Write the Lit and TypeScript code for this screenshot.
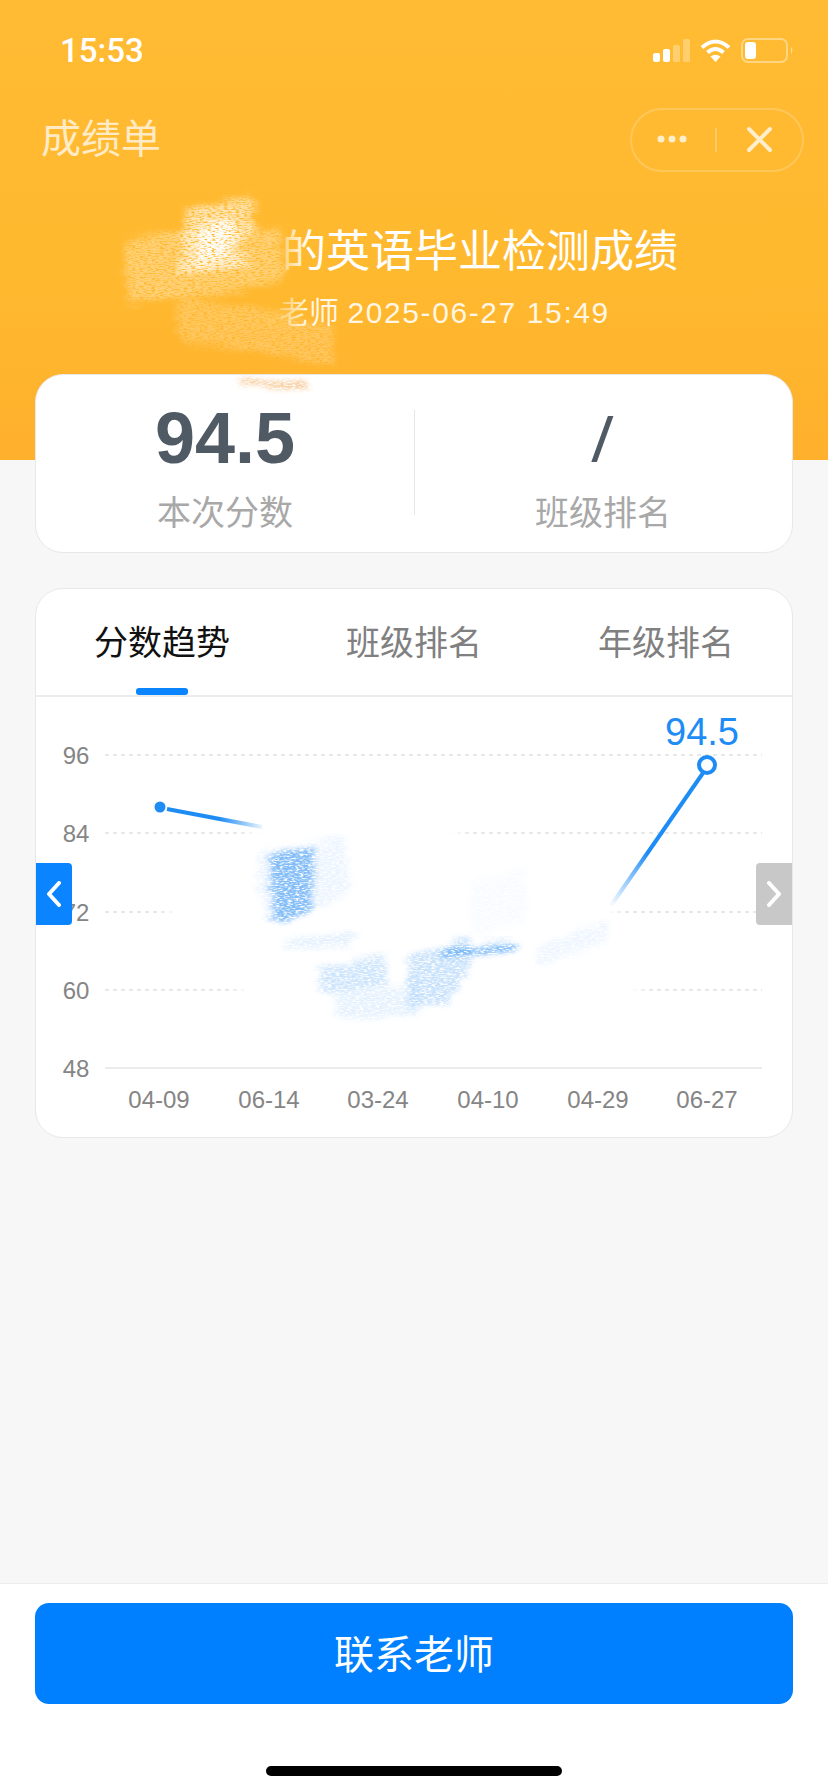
import { LitElement, html, css, svg } from 'lit';
import { customElement } from 'lit/decorators.js';

const GRID_Y = [
  { label: '96', y: 755 },
  { label: '84', y: 833 },
  { label: '72', y: 912 },
  { label: '60', y: 990 },
  { label: '48', y: 1068 },
];

const DATES = [
  { label: '04-09', x: 159 },
  { label: '06-14', x: 269 },
  { label: '03-24', x: 378 },
  { label: '04-10', x: 488 },
  { label: '04-29', x: 598 },
  { label: '06-27', x: 707 },
];

// the scribbled-out parts of the picture, in page coordinates
const HEADER_MARKS = [
  { points: '126,240 200,230 280,228 284,282 200,296 126,302', fill: '#fff', op: 0.36 },
  { points: '178,298 250,306 330,326 336,366 260,352 180,340', fill: '#fff', op: 0.24 },
  { points: '186,207 256,197 252,226 236,250 250,264 180,274', fill: '#fff', op: 0.62 },
  { points: '198,224 232,216 230,256 198,268', fill: '#fff', op: 0.9 },
  { points: '236,377 308,381 306,389 238,384', fill: '#f6c48a', op: 0.85 },
];

const CHART_MARKS = [
  { points: '258,852 345,838 350,896 272,925 258,895', fill: '#dcecff', op: 0.55 },
  { points: '270,856 314,846 312,912 274,924', fill: '#7dbaf8', op: 0.95 },
  { points: '283,940 355,934 355,945 283,947', fill: '#c2dffc', op: 0.5 },
  { points: '318,966 385,958 388,986 322,992', fill: '#a6d0fa', op: 0.55 },
  { points: '335,992 420,984 420,1016 335,1018', fill: '#cce4fd', op: 0.5 },
  { points: '408,954 470,938 472,966 450,1003 408,1010', fill: '#a6d0fa', op: 0.6 },
  { points: '442,949 516,942 516,952 442,956', fill: '#5aa8f6', op: 0.85 },
  { points: '470,882 527,868 527,923 470,935', fill: '#f1f7ff', op: 0.5 },
  { points: '537,944 608,920 608,943 539,964', fill: '#e0eeff', op: 0.55 },
];

@customElement('app-root')
export class AppRoot extends LitElement {
  static styles = css`
    :host {
      display: block;
      font-family: "Liberation Sans", "Noto Sans CJK SC", sans-serif;
    }
    .page {
      position: relative;
      display: flex;
      flex-direction: column;
      height: 1792px;
      background: #f7f7f7;
      overflow: hidden;
    }
    .header {
      height: 460px;
      box-sizing: border-box;
      flex: none;
      background: linear-gradient(180deg, #ffbb33 0%, #ffb92f 60%, #ffb02c 100%);
      color: #fff;
    }
    .status {
      height: 100px;
      display: flex;
      align-items: center;
      justify-content: space-between;
      padding: 0 34px 0 60px;
    }
    .time {
      font-family: Roboto, sans-serif;
      font-size: 33px;
      font-weight: 500;
    }
    .status-icons {
      display: flex;
      align-items: center;
      gap: 10px;
    }
    .status-icons svg {
      display: block;
    }
    .nav {
      height: 64px;
      margin-top: 8px;
      display: flex;
      align-items: center;
      justify-content: space-between;
      padding: 0 24px 0 41px;
    }
    .nav-title {
      font-size: 40px;
      line-height: 56px;
      margin-top: -2px;
      color: rgba(255, 255, 255, 0.72);
    }
    .capsule {
      width: 174px;
      height: 64px;
      box-sizing: border-box;
      border: 2px solid rgba(255, 255, 255, 0.2);
      border-radius: 32px;
      display: flex;
      align-items: center;
    }
    .capsule svg {
      display: block;
    }
    .headline {
      margin-top: 50px;
      text-align: center;
      font-size: 44px;
      line-height: 60px;
    }
    .subline {
      margin-top: 11px;
      text-align: center;
      font-size: 30px;
      line-height: 40px;
      color: rgba(255, 255, 255, 0.88);
    }
    .date {
      letter-spacing: 1.6px;
    }
    .redacted {
      display: inline-block;
      width: 132px;
    }
    .subline .redacted {
      width: 61px;
    }
    .card {
      background: #fff;
      border: 1px solid #e8e8e8;
      border-radius: 28px;
      margin: 0 35px;
      box-sizing: border-box;
    }
    .stats {
      flex: none;
      height: 179px;
      margin-top: -86px;
      display: flex;
      position: relative;
    }
    .stat {
      flex: 1;
      display: flex;
      flex-direction: column;
      align-items: center;
      color: #4f5a64;
    }
    .stat + .stat {
      position: relative;
    }
    .stat + .stat::before {
      content: '';
      position: absolute;
      left: 0;
      top: 35px;
      height: 105px;
      width: 1px;
      background: #e6e6e6;
    }
    .stat-value {
      height: 92px;
      margin-top: 17px;
      line-height: 92px;
      font-size: 72px;
      font-weight: 700;
    }
    .stat-value.empty {
      font-family: Roboto, sans-serif;
      font-weight: 500;
      font-size: 60px;
    }
    .stat-label {
      margin-top: 6px;
      font-size: 34px;
      line-height: 46px;
      color: #a8a8a8;
    }
    .trend {
      flex: none;
      height: 550px;
      margin-top: 35px;
      overflow: hidden;
    }
    .tabs {
      height: 108px;
      box-sizing: border-box;
      display: flex;
      border-bottom: 2px solid #ececec;
    }
    .tab {
      flex: 1;
      position: relative;
      text-align: center;
      font-size: 34px;
      line-height: 46px;
      padding-top: 31px;
      color: #808080;
    }
    .tab.active {
      color: #111;
    }
    .tab.active::after {
      content: '';
      position: absolute;
      left: 50%;
      bottom: 0;
      width: 52px;
      height: 7px;
      margin-left: -26px;
      border-radius: 3px;
      background: #0a84ff;
    }
    .chart {
      position: relative;
      height: 440px;
    }
    .chart > svg {
      display: block;
    }
    .chart text {
      font-family: "Liberation Sans", sans-serif;
      font-size: 24px;
      fill: #858585;
    }
    .chart text.peak {
      font-size: 38px;
      fill: #1e8cf5;
    }
    .arrow {
      position: absolute;
      top: 166px;
      width: 36px;
      height: 62px;
      display: flex;
      align-items: center;
      justify-content: center;
    }
    .arrow.prev {
      left: 0;
      background: #0a84ff;
      border-radius: 0 4px 4px 0;
    }
    .arrow.next {
      right: 0;
      background: #c8c8c8;
      border-radius: 4px 0 0 4px;
    }
    .spacer {
      flex: 1;
    }
    .footer {
      flex: none;
      height: 209px;
      box-sizing: border-box;
      background: #fff;
      border-top: 1px solid #ededed;
      padding: 19px 35px 0;
      display: flex;
      flex-direction: column;
      align-items: center;
    }
    .contact {
      width: 100%;
      height: 101px;
      box-sizing: border-box;
      padding-top: 3px;
      border-radius: 14px;
      background: #0080ff;
      color: #fff;
      font-size: 40px;
      line-height: 98px;
      text-align: center;
    }
    .home-bar {
      width: 296px;
      height: 10px;
      margin-top: 62px;
      border-radius: 5px;
      background: #000;
    }
    .marks {
      position: absolute;
      left: 0;
      top: 0;
      pointer-events: none;
    }
  `;

  private marks(list: { points: string; fill: string; op: number }[], filter: string) {
    return list.map(
      (m) => svg`<polygon points=${m.points} fill=${m.fill} opacity=${m.op} filter=${filter}></polygon>`
    );
  }

  // pencil look: rough the edges of a polygon, then punch grain out of it
  private grainFilter(id: string, seed: number, slope: number, cut: number) {
    return svg`<filter id=${id} x="-25%" y="-40%" width="150%" height="180%" color-interpolation-filters="sRGB">
      <feTurbulence type="fractalNoise" baseFrequency="0.01 0.3" numOctaves="2" seed=${seed} result="wobble"></feTurbulence>
      <feDisplacementMap in="SourceGraphic" in2="wobble" scale="24" xChannelSelector="R" yChannelSelector="G"></feDisplacementMap>
      <feGaussianBlur stdDeviation="2.6" result="soft"></feGaussianBlur>
      <feTurbulence type="fractalNoise" baseFrequency="0.25 0.75" numOctaves="4" seed=${seed + 5} result="noise"></feTurbulence>
      <feColorMatrix in="noise" type="matrix" values=${`0 0 0 0 1 0 0 0 0 1 0 0 0 0 1 ${slope} 0 0 0 ${cut}`} result="mask"></feColorMatrix>
      <feComposite in="soft" in2="mask" operator="in"></feComposite>
    </filter>`;
  }

  private renderChart() {
    return html`<svg width="755" height="440" viewBox="36 697 755 440">
      <defs>
        ${this.grainFilter('chart-grain', 7, 3, -0.75)}
        <filter id="cover-blur"><feGaussianBlur stdDeviation="7"></feGaussianBlur></filter>
        <linearGradient id="fade-a" gradientUnits="userSpaceOnUse" x1="167" y1="809" x2="262" y2="827">
          <stop offset="0.55" stop-color="#1e8cf5"></stop>
          <stop offset="1" stop-color="#1e8cf5" stop-opacity="0.1"></stop>
        </linearGradient>
        <linearGradient id="fade-b" gradientUnits="userSpaceOnUse" x1="703" y1="773" x2="610" y2="907">
          <stop offset="0.6" stop-color="#1e8cf5"></stop>
          <stop offset="0.75" stop-color="#1e8cf5" stop-opacity="0.6"></stop>
          <stop offset="1" stop-color="#1e8cf5" stop-opacity="0"></stop>
        </linearGradient>
      </defs>
      ${GRID_Y.slice(0, 4).map(
        (g) => svg`<line x1="105" x2="762" y1=${g.y} y2=${g.y} stroke="#e8e8e8" stroke-width="2" stroke-dasharray="4 4"></line>`
      )}
      <line x1="105" x2="762" y1="1068" y2="1068" stroke="#ebebeb" stroke-width="2"></line>
      <polygon points="250,815 460,815 460,850 615,880 615,925 640,975 640,1010 240,1010 240,970 170,930 170,895 250,860" fill="#fff" filter="url(#cover-blur)"></polygon>
      ${GRID_Y.map(
        (g) => svg`<text x="76" y=${g.y + 9} text-anchor="middle">${g.label}</text>`
      )}
      ${DATES.map(
        (d) => svg`<text x=${d.x} y="1108" text-anchor="middle">${d.label}</text>`
      )}
      ${this.marks(CHART_MARKS, 'url(#chart-grain)')}
      <circle cx="160" cy="807" r="5.5" fill="#1e8cf5"></circle>
      <line x1="167" y1="809" x2="262" y2="827" stroke="url(#fade-a)" stroke-width="4"></line>
      <line x1="703" y1="773" x2="610" y2="907" stroke="url(#fade-b)" stroke-width="4"></line>
      <circle cx="707" cy="765" r="8" fill="#fff" stroke="#1e8cf5" stroke-width="4"></circle>
      <text class="peak" x="702" y="745" text-anchor="middle">94.5</text>
    </svg>`;
  }

  render() {
    return html`
      <div class="page">
        <div class="header">
          <div class="status">
            <span class="time">15:53</span>
            <div class="status-icons">
              <svg width="37" height="23" viewBox="0 0 37 23" fill="#fff">
                <rect x="0" y="14" width="7" height="9" rx="2"></rect>
                <rect x="10" y="10" width="7" height="13" rx="2"></rect>
                <rect x="20" y="6" width="7" height="17" rx="1.5" opacity="0.3"></rect>
                <rect x="30" y="0" width="7" height="23" rx="1.5" opacity="0.3"></rect>
              </svg>
              <svg width="31" height="24" viewBox="0 0 31 24" fill="none">
                <path d="M2 9.5Q15.5 -2.5 29 9.5" stroke="#fff" stroke-width="4"></path>
                <path d="M7.5 14.5Q15.5 7.5 23.5 14.5" stroke="#fff" stroke-width="4"></path>
                <path d="M10.5 18.5Q15.5 15 20.5 18.5L15.5 24Z" fill="#fff"></path>
              </svg>
              <svg width="53" height="25" viewBox="0 0 53 25" fill="none">
                <rect x="1" y="1" width="45" height="23" rx="6" stroke="#fff" stroke-opacity="0.4" stroke-width="2"></rect>
                <rect x="4" y="4" width="11" height="17" rx="3" fill="#fff"></rect>
                <path d="M50 9Q53 12.5 50 16Z" fill="#fff" fill-opacity="0.45"></path>
              </svg>
            </div>
          </div>
          <div class="nav">
            <span class="nav-title">成绩单</span>
            <div class="capsule">
              <svg width="170" height="60" viewBox="0 0 170 60" fill="none">
                <g fill="#fff" fill-opacity="0.75">
                  <circle cx="29" cy="29" r="3.5"></circle>
                  <circle cx="40" cy="29" r="3.5"></circle>
                  <circle cx="51" cy="29" r="3.5"></circle>
                </g>
                <line x1="84" x2="84" y1="18" y2="42" stroke="#fff" stroke-opacity="0.25" stroke-width="2"></line>
                <path d="M117 19L138 40M138 19L117 40" stroke="#fff" stroke-opacity="0.75" stroke-width="4" stroke-linecap="round"></path>
              </svg>
            </div>
          </div>
          <div class="headline"><span class="redacted"></span>的英语毕业检测成绩</div>
          <div class="subline"><span class="redacted"></span>老师 <span class="date">2025-06-27 15:49</span></div>
        </div>
        <div class="card stats">
          <div class="stat">
            <div class="stat-value">94.5</div>
            <div class="stat-label">本次分数</div>
          </div>
          <div class="stat">
            <div class="stat-value empty">/</div>
            <div class="stat-label">班级排名</div>
          </div>
        </div>
        <div class="card trend">
          <div class="tabs">
            <div class="tab active">分数趋势</div>
            <div class="tab">班级排名</div>
            <div class="tab">年级排名</div>
          </div>
          <div class="chart">
            ${this.renderChart()}
            <div class="arrow prev">
              <svg width="16" height="26" viewBox="0 0 16 26" fill="none"><path d="M13 2L3 13L13 24" stroke="#fff" stroke-width="4" stroke-linecap="round" stroke-linejoin="round"></path></svg>
            </div>
            <div class="arrow next">
              <svg width="16" height="26" viewBox="0 0 16 26" fill="none"><path d="M3 2L13 13L3 24" stroke="#fff" stroke-width="4" stroke-linecap="round" stroke-linejoin="round"></path></svg>
            </div>
          </div>
        </div>
        <div class="spacer"></div>
        <div class="footer">
          <div class="contact">联系老师</div>
          <div class="home-bar"></div>
        </div>
        <svg class="marks" width="828" height="460" viewBox="0 0 828 460">
          <defs>
            ${this.grainFilter('head-grain', 3, 3, -0.75)}
            <linearGradient id="text-fade" gradientUnits="userSpaceOnUse" x1="268" x2="310" y1="0" y2="0">
              <stop offset="0" stop-color="#ffb92f"></stop>
              <stop offset="1" stop-color="#ffb92f" stop-opacity="0"></stop>
            </linearGradient>
          </defs>
          <rect x="268" y="226" width="42" height="48" fill="url(#text-fade)"></rect>
          <rect x="268" y="298" width="36" height="30" fill="url(#text-fade)"></rect>
          ${this.marks(HEADER_MARKS, 'url(#head-grain)')}
        </svg>
      </div>
    `;
  }
}
